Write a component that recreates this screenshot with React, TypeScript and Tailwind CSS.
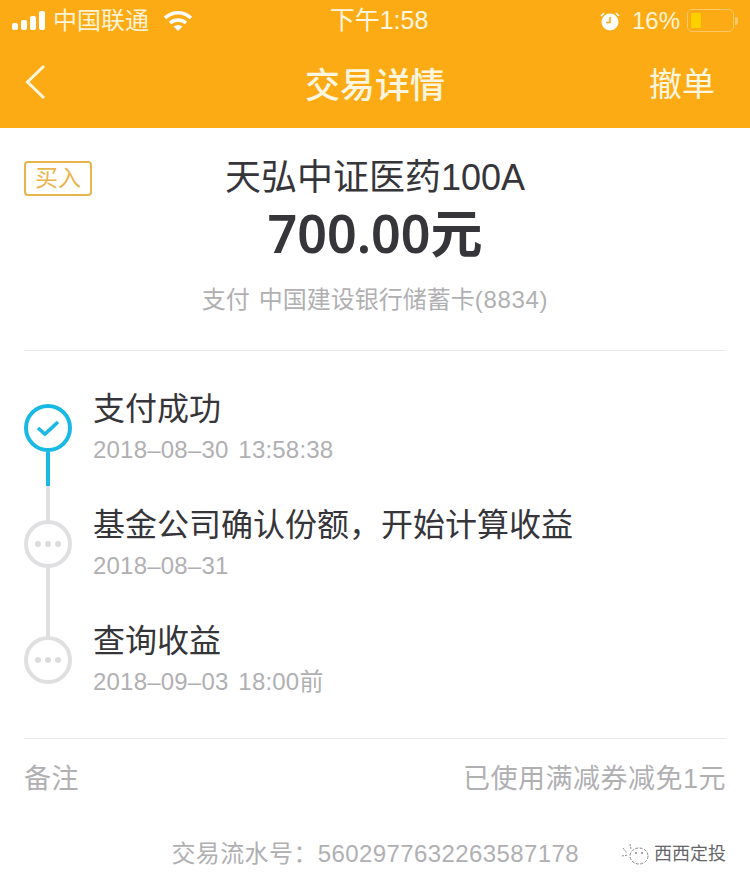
import React from 'react';

const FONT = "font-['Liberation_Sans','Noto_Sans_CJK_SC',sans-serif]";

const StatusBar = () => (
  <div className="h-[40px] pt-[1px] flex items-center justify-between pl-[12px] pr-[12px] text-[#fff3d6] text-[24px] leading-none">
    <div className="flex items-center w-[284px]">
      <svg width="34" height="20" viewBox="0 0 34 20" fill="#fff">
        <rect x="0" y="12" width="6" height="7" rx="2" />
        <rect x="9" y="9" width="6" height="10" rx="2" />
        <rect x="18" y="5" width="6" height="14" rx="2" />
        <rect x="27" y="0" width="6" height="19" rx="2" />
      </svg>
      <span className="ml-[7px] w-[98px] text-[24px]">中国联通</span>
      <svg className="ml-[12px]" width="30" height="22" viewBox="0 0 30 22" fill="none">
        <path d="M2 8C9.5 1 20.5 1 28 8" stroke="#fff" strokeWidth="3.6" />
        <path d="M7 13C11.5 9 18.5 9 23 13" stroke="#fff" strokeWidth="3.6" />
        <path d="M10.5 16.5L15 21L19.5 16.5C16.5 14.5 13.5 14.5 10.5 16.5Z" fill="#fff" />
      </svg>
    </div>
    <span className="text-[25px] text-[#fff6e0]">下午1:58</span>
    <div className="flex items-center justify-end w-[276px]">
      <svg width="22" height="22" viewBox="0 0 22 22" fill="none">
        <circle cx="11" cy="12" r="8.5" fill="#fff" />
        <path d="M11 7V12.5H7" stroke="#fdab14" strokeWidth="1.6" />
        <path d="M2 6L5 3M20 6L17 3" stroke="#fff" strokeWidth="1.6" />
      </svg>
      <span className="ml-[11px] text-[24px]">16%</span>
      <div className="ml-[7px] w-[47px] h-[23px] rounded-[5px] border border-[#fdc868] p-[3px]">
        <div className="w-[10px] h-full bg-[#ffd000] rounded-[1px]" />
      </div>
      <div className="ml-[1px] w-[3px] h-[8px] bg-[#fdc868] rounded-r-[2px]" />
    </div>
  </div>
);

const NavBar = () => (
  <div className="h-[88px] flex items-center justify-between pl-[24px] pr-[35px] text-[#fff6e0]">
    <div className="w-[111px] pb-[4px]">
      <svg width="24" height="36" viewBox="0 0 24 36" fill="none">
        <path d="M20 2L3.5 18L20 34" stroke="#fff6e0" strokeWidth="3" />
      </svg>
    </div>
    <span className="pt-[3px] text-[35px] leading-none font-medium">交易详情</span>
    <span className="w-[100px] text-right text-[33px] leading-none">撤单</span>
  </div>
);

type Step = { title: string; time: string; done?: boolean };

const steps: Step[] = [
  { title: '支付成功', time: '2018–08–30 13:58:38', done: true },
  { title: '基金公司确认份额，开始计算收益', time: '2018–08–31' },
  { title: '查询收益', time: '2018–09–03 18:00前' },
];

const StepIcon = ({ done }: { done?: boolean }) =>
  done ? (
    <div className="w-[48px] h-[48px] shrink-0 rounded-full border-[4px] border-[#1ab8e4] flex items-center justify-center bg-white">
      <svg width="26" height="20" viewBox="0 0 26 20" fill="none">
        <path d="M3 10L10 16L23 4" stroke="#1ab8e4" strokeWidth="3.6" />
      </svg>
    </div>
  ) : (
    <div className="w-[48px] h-[48px] shrink-0 rounded-full border-[4px] border-[#dfdfe2] flex items-center justify-center gap-[4px] bg-white">
      <div className="w-[6px] h-[6px] rounded-full bg-[#dcdcde]" />
      <div className="w-[6px] h-[6px] rounded-full bg-[#dcdcde]" />
      <div className="w-[6px] h-[6px] rounded-full bg-[#dcdcde]" />
    </div>
  );

const Timeline = () => (
  <div className="pt-[35px] pb-[39px] border-b border-[#e9e9e9] flex flex-col">
    {steps.map((s, i) => (
      <div key={i} className="flex h-[116px] last:h-[81px]">
        <div className="w-[48px] flex flex-col items-center shrink-0">
          <div className={i === 0 ? 'h-[18px] w-[4px]' : 'h-[18px] w-[4px] bg-[#dfdfe2]'} />
          <StepIcon done={s.done} />
          {i < 2 && (
            <div className="flex-1 w-[4px] bg-[#dfdfe2]">
              {s.done && <div className="h-[34px] bg-[#1ab8e4]" />}
            </div>
          )}
        </div>
        <div className="ml-[21px]">
          <div className="h-[46px] text-[32px] leading-[46px] text-[#35353a]">{s.title}</div>
          <div className="mt-[2px] text-[24px] leading-[32px] tracking-[0.2px] [word-spacing:3px] text-[#b0b0b3]">{s.time}</div>
        </div>
      </div>
    ))}
  </div>
);

export default function App() {
  return (
    <div className={`w-[750px] h-[887px] overflow-hidden bg-white ${FONT}`}>
      <div className="h-[128px] bg-[#fdab14]">
        <StatusBar />
        <NavBar />
      </div>

      <div className="px-[24px]">
        <div className="relative h-[223px] border-b border-[#e9e9e9] flex flex-col items-center">
          <div className="absolute left-0 top-[33px] w-[68px] h-[35px] rounded-[4px] border-2 border-[#e9b44c] text-[#e9b44c] text-[23px] leading-[31px] text-center">
            买入
          </div>
          <div className="mt-[27px] text-[36px] leading-[46px] text-[#35353a]">天弘中证医药100A</div>
          <div className="mt-[2px] font-['Noto_Sans','Noto_Sans_CJK_SC',sans-serif] text-[52px] leading-[60px] font-semibold text-[#35353a]">700.00元</div>
          <div className="mt-[21px] text-[24px] leading-[32px] text-[#b0b0b3]">
            支付
            <span className="ml-[9px]">中国建设银行储蓄卡</span>
            <span className="tracking-[0.7px]">(8834)</span>
          </div>
        </div>

        <Timeline />

        <div className="h-[80px] flex items-center justify-between text-[27px] tracking-[0.5px] text-[#b0b0b3]">
          <span>备注</span>
          <span>已使用满减券减免1元</span>
        </div>

        <div className="mt-[19px] flex items-center justify-end text-[24px] leading-[32px] text-[#b0b0b3]">
          <span className="tracking-[0.4px]">交易流水号：5602977632263587178</span>
          <svg className="ml-[42px]" width="30" height="24" viewBox="0 0 30 24" fill="none" stroke="#8a8a8a" strokeWidth="1">
            <ellipse cx="18" cy="14" rx="9" ry="8" strokeDasharray="3 1.5" />
            <circle cx="15" cy="11" r="0.7" />
            <circle cx="21" cy="11" r="0.7" />
            <path d="M2 6L6 11M9 2L10 7M1 14L7 13" strokeDasharray="2 1" />
          </svg>
          <span className="ml-[3px] text-[18px] text-[#66666a]">西西定投</span>
        </div>
      </div>
    </div>
  );
}
